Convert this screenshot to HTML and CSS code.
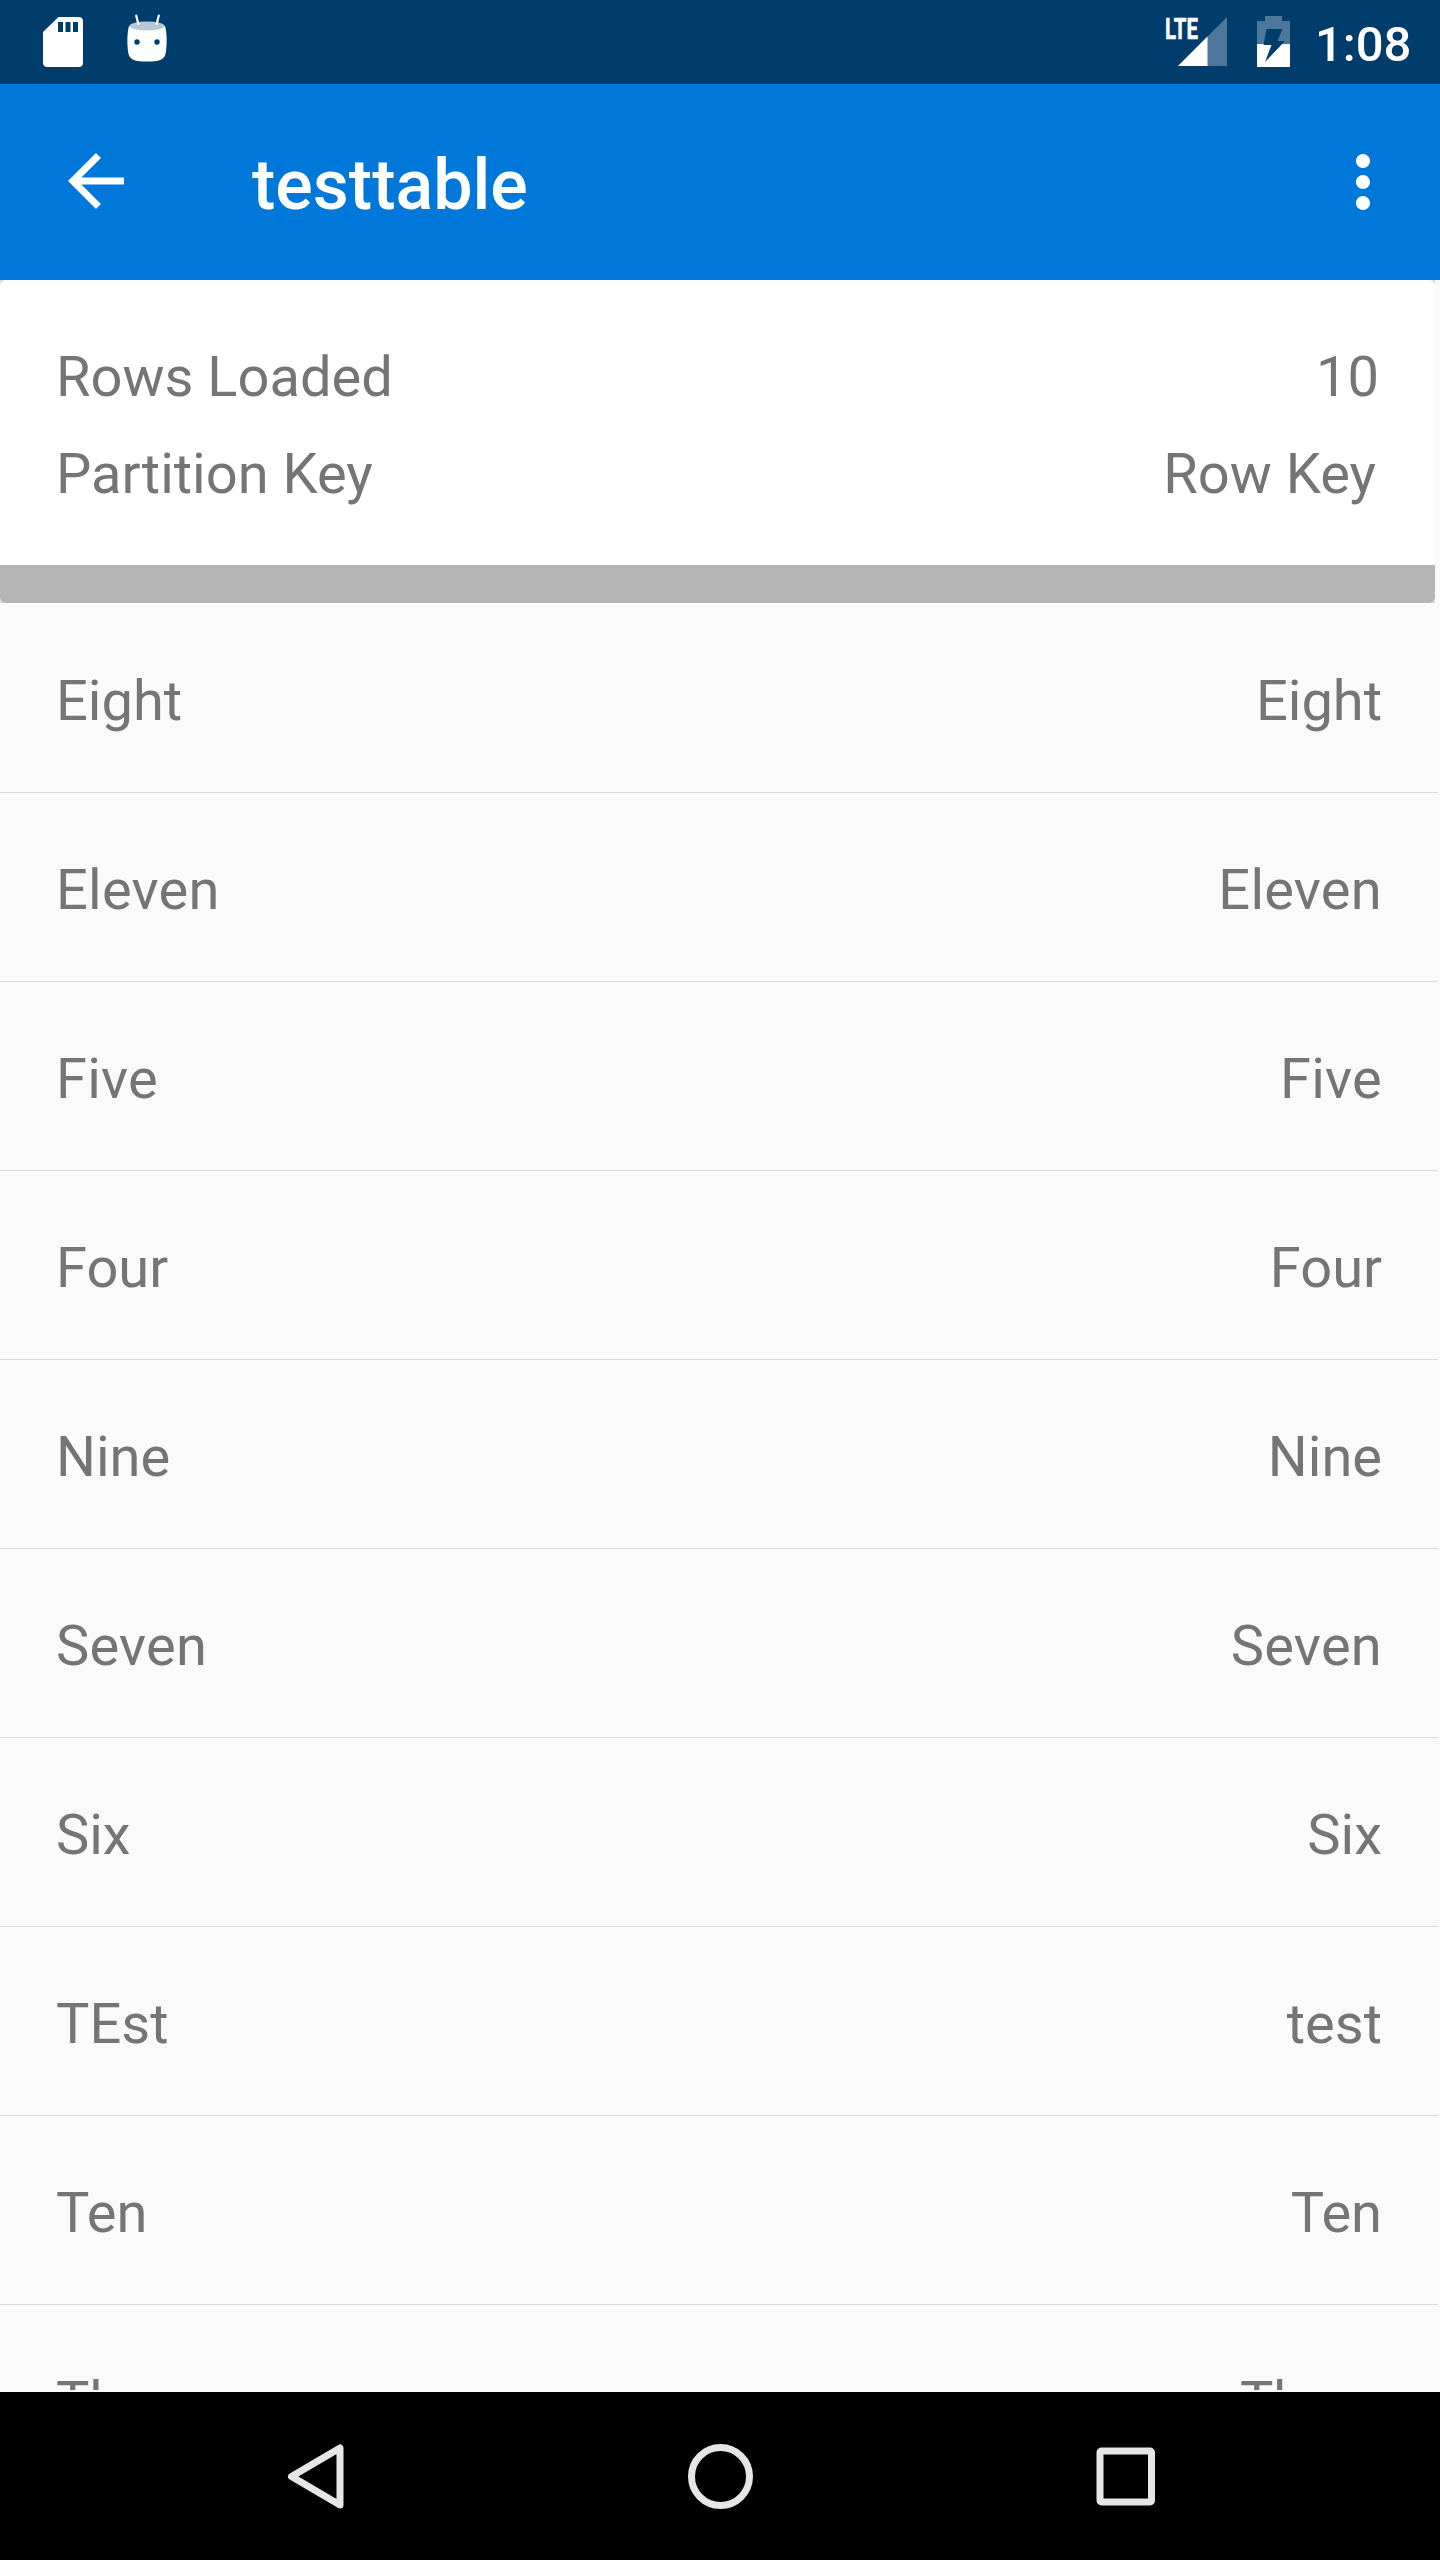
FILE: index.html
```html
<!DOCTYPE html>
<html lang="en">
<head>
<meta charset="utf-8">
<title>testtable</title>
<link rel="stylesheet" href="styles.css">
</head>
<body>
<div class="screen">
  <div class="status-bar">
    <svg class="icon-sd" width="40" height="50" viewBox="0 0 40 50"><path fill="#fff" fill-rule="evenodd" d="M15.500 0H35.500Q40 0 40 4.500V45.500Q40 50 35.500 50H4.500Q0 50 0 45.500V15ZM15 5V15H20V5ZM22.500 5V15H27.500V5ZM30 5V15H35V5Z"/></svg>
    <svg class="icon-droid" width="40" height="48" viewBox="0 0 40 48"><path fill="#fff" d="M2 12C0 19 0 29 1 37C2 45 5 47.500 20 47.500S38 45 39 37C40 29 40 19 38 12Z"/><ellipse cx="20" cy="12" rx="17.500" ry="4.500" fill="#b9c8d5"/><path d="M9.200 1.500L11.300 10M31.800 1.500L29.700 10" stroke="#fff" stroke-width="2.200" stroke-linecap="round"/><circle cx="10" cy="28" r="2.700" fill="#003d6c"/><circle cx="30" cy="28" r="2.700" fill="#003d6c"/></svg>
    <span class="spacer"></span>
    <svg class="icon-signal" width="62" height="50" viewBox="0 0 62 50"><path fill="#4d779a" d="M61 0V49H12Z"/><path fill="#fff" d="M41.500 19.500V49H12Z"/><text class="lte" x="-1" y="22" textLength="33" lengthAdjust="spacingAndGlyphs">LTE</text></svg>
    <svg class="icon-battery" width="33" height="51" viewBox="0 0 33 51"><path fill="#4d779a" d="M8 0H25V5H33V28H0V5H8Z"/><path fill="#fff" d="M0 28H33V51H0Z"/><path fill="#003d6c" d="M9.500 13H25.500L20.500 25H28L8 46L14.500 29H6.500Z"/></svg>
    <span class="clock">1:08</span>
  </div>
  <div class="app-bar">
    <svg class="icon-back" width="84" height="84" viewBox="0 0 24 24"><path fill="#fff" d="M20 11H7.830l5.590-5.590L12 4l-8 8 8 8 1.410-1.410L7.830 13H20v-2z"/></svg>
    <h1 class="title">testtable</h1>
    <svg class="icon-more" width="84" height="84" viewBox="0 0 24 24"><path fill="#fff" d="M12 8c1.100 0 2-.9 2-2s-.9-2-2-2-2 .9-2 2 .9 2 2 2zm0 2c-1.100 0-2 .9-2 2s.9 2 2 2 2-.9 2-2-.9-2-2-2zm0 6c-1.100 0-2 .9-2 2s.9 2 2 2 2-.9 2-2-.9-2-2-2z"/></svg>
  </div>
  <div class="summary-back">
    <div class="summary">
      <div class="summary-row"><span>Rows Loaded</span><span>10</span></div>
      <div class="summary-row columns"><span>Partition Key</span><span>Row Key</span></div>
    </div>
  </div>
  <div class="list">
    <div class="row"><span>Eight</span><span>Eight</span></div>
    <div class="row loose"><span>Eleven</span><span>Eleven</span></div>
    <div class="row loose"><span>Five</span><span>Five</span></div>
    <div class="row"><span>Four</span><span>Four</span></div>
    <div class="row"><span>Nine</span><span>Nine</span></div>
    <div class="row loose"><span>Seven</span><span>Seven</span></div>
    <div class="row"><span>Six</span><span>Six</span></div>
    <div class="row"><span>TEst</span><span>test</span></div>
    <div class="row"><span>Ten</span><span>Ten</span></div>
    <div class="row"><span>Three</span><span>Three</span></div>
  </div>
  <div class="nav-bar">
    <svg width="68" height="68" viewBox="0 0 68 68"><path d="M59 6V63L10.500 34.500Z" fill="none" stroke="#e6e6e6" stroke-width="7" stroke-linejoin="round"/></svg>
    <svg width="68" height="68" viewBox="0 0 68 68"><circle cx="34.500" cy="34.500" r="29" fill="none" stroke="#e6e6e6" stroke-width="7"/></svg>
    <svg width="68" height="68" viewBox="0 0 68 68"><rect x="9" y="9" width="51.500" height="51" rx="1.500" fill="none" stroke="#e6e6e6" stroke-width="7"/></svg>
  </div>
</div>
</body>
</html>
```
FILE: styles.css
```css
* { box-sizing: border-box; }
body { margin: 0; font-family: Roboto, sans-serif; color: #757575; background: #fafafa; }
svg { display: block; flex: none; overflow: visible; }
.screen { width: 1440px; height: 2560px; display: flex; flex-direction: column; overflow: hidden; }
.status-bar { height: 84px; flex: none; display: flex; align-items: flex-start; background: #003d6c; color: #fff; padding: 0 28px 0 43px; }
.icon-sd { margin-top: 17px; }
.icon-droid { margin: 14px 0 0 44px; }
.spacer { flex: 1; }
.icon-signal { margin-top: 17px; }
.lte { font: 700 30px Roboto, sans-serif; fill: #fff; stroke: #fff; stroke-width: .5px; }
.icon-battery { margin: 16px 0 0 29px; }
.clock { font-size: 49px; font-weight: 500; line-height: 58px; margin: 16px 0 0 25px; width: 97px; white-space: nowrap; }
.app-bar { height: 196px; flex: none; display: flex; align-items: center; background: #0078d9; color: #fff; padding: 0 35px 0 54px; }
.icon-back { margin-bottom: 3px; }
.title { flex: 1; margin: 6px 0 0 114px; font-size: 70px; font-weight: 500; line-height: 82px; }
.summary-back { width: 1435px; height: 324px; flex: none; background: linear-gradient(#dcdcdc 0 6px, #fafafa 6px 318px, #dcdcdc 318px 323px, #fafafa 323px); }
.summary { height: 323px; border-radius: 6px; border-bottom: 38px solid #b5b5b5; background: #fff; padding: 64px 56px 0; }
.summary-row { height: 97px; display: flex; justify-content: space-between; font-size: 56px; line-height: 66px; }
.columns { padding-right: 3px; }
.list { height: 1786px; flex: none; overflow: hidden; margin-right: 2px; }
.row { height: 189px; display: flex; justify-content: space-between; padding: 64px 56px 0; border-bottom: 1px solid #dcdcdc; font-size: 56px; line-height: 66px; }
.loose { letter-spacing: .25px; }
.nav-bar { height: 168px; flex: none; margin-top: 2px; display: flex; align-items: center; justify-content: center; gap: 337px; background: #000; }
```
